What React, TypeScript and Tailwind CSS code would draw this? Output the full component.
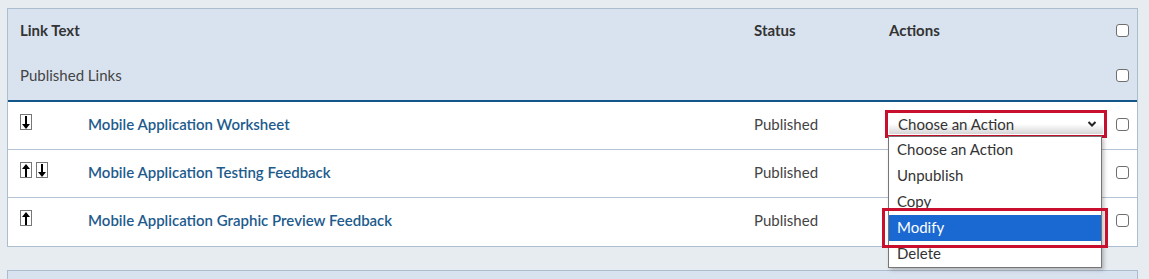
import React from "react";

function ArrowBox({ dir }: { dir: "up" | "down" }) {
  return (
    <span className="inline-flex w-[12px] h-[16px] border border-[#777] bg-white items-center justify-center">
      <svg width="8" height="13" viewBox="0 0 8 13">
        {dir === "down" ? (
          <path d="M3 0h2v8h3l-4 5-4-5h3z" fill="#000" />
        ) : (
          <path d="M3 13h2V5h3L4 0 0 5h3z" fill="#000" />
        )}
      </svg>
    </span>
  );
}

function Check() {
  return <span className="block w-[13px] h-[13px] rounded-[3px] border border-[#6f6f6f] bg-white" />;
}

const rows = [
  { arrows: ["down"], title: "Mobile Application Worksheet" },
  { arrows: ["up", "down"], title: "Mobile Application Testing Feedback" },
  { arrows: ["up"], title: "Mobile Application Graphic Preview Feedback" },
];

const options = ["Choose an Action", "Unpublish", "Copy", "Modify", "Delete"];

export default function App() {
  return (
    <div className="w-[1149px] h-[279px] overflow-hidden bg-[#e7ecf1] pt-[8px] pl-[7px] pr-[11px] font-['Lato',sans-serif] text-[15px]">
      <div className="relative border border-[#adbdd0] bg-white">
        {/* header */}
        <div className="bg-[#d9e3ef] border-b-2 border-[#13568a] text-[#333]">
          <div className="flex items-center h-[45px] pb-[2px]">
            <div className="w-[80px] pl-[12px] font-bold whitespace-nowrap">Link Text</div>
            <div className="flex-1" />
            <div className="w-[135px] font-bold">Status</div>
            <div className="w-[218px] font-bold">Actions</div>
            <div className="w-[30px] flex justify-end pr-[8px]"><Check /></div>
          </div>
          <div className="flex items-center h-[46px] pb-[3px]">
            <div className="flex-1 pl-[12px] text-[#444]">Published Links</div>
            <div className="w-[30px] flex justify-end pr-[8px]"><Check /></div>
          </div>
        </div>

        {/* rows */}
        {rows.map((r, i) => (
          <div key={r.title} className={`flex items-center h-[48px] pb-[3px] ${i < rows.length - 1 ? "border-b border-[#b3c2d4]" : ""}`}>
            <div className="w-[80px] pl-[12px] flex gap-[4px] self-start pt-[12px]">
              {r.arrows.map((a, j) => (
                <ArrowBox key={j} dir={a as "up" | "down"} />
              ))}
            </div>
            <div className="flex-1 font-semibold text-[#1d5b8d]">{r.title}</div>
            <div className="w-[135px] text-[#444]">Published</div>
            <div className="w-[218px]">
              {i === 0 && (
                <div className="w-[214px] h-[20px] bg-gradient-to-b from-white via-white to-[#d6d6d6] flex items-center justify-between pl-[9px] pr-[6px] text-[#333] outline-[3px] outline-[#c8102e] outline-offset-[1px]">
                  <span>Choose an Action</span>
                  <svg width="10" height="8" viewBox="0 0 10 8">
                    <path d="M1.5 2l3.5 3.5L8.5 2" stroke="#222" strokeWidth="2" fill="none" />
                  </svg>
                </div>
              )}
            </div>
            <div className="w-[30px] flex justify-end pr-[8px]"><Check /></div>
          </div>
        ))}

        {/* open dropdown list */}
        <div className="absolute left-[880px] top-[127px] w-[214px] bg-white border border-[#767676] shadow-[2px_2px_4px_rgba(0,0,0,0.25)] text-[#333] z-10">
          {options.map((o) => (
            <div
              key={o}
              className={`h-[26px] flex items-center pl-[8px] pb-[2px] ${o === "Modify" ? "bg-[#1a68d1] text-white outline-[3px] outline-[#c8102e] outline-offset-[4px]" : ""}`}
            >
              {o}
            </div>
          ))}
        </div>
      </div>

      <div className="mt-[23px] h-[40px] border border-[#adbdd0] bg-[#d9e3ef]" />
    </div>
  );
}
